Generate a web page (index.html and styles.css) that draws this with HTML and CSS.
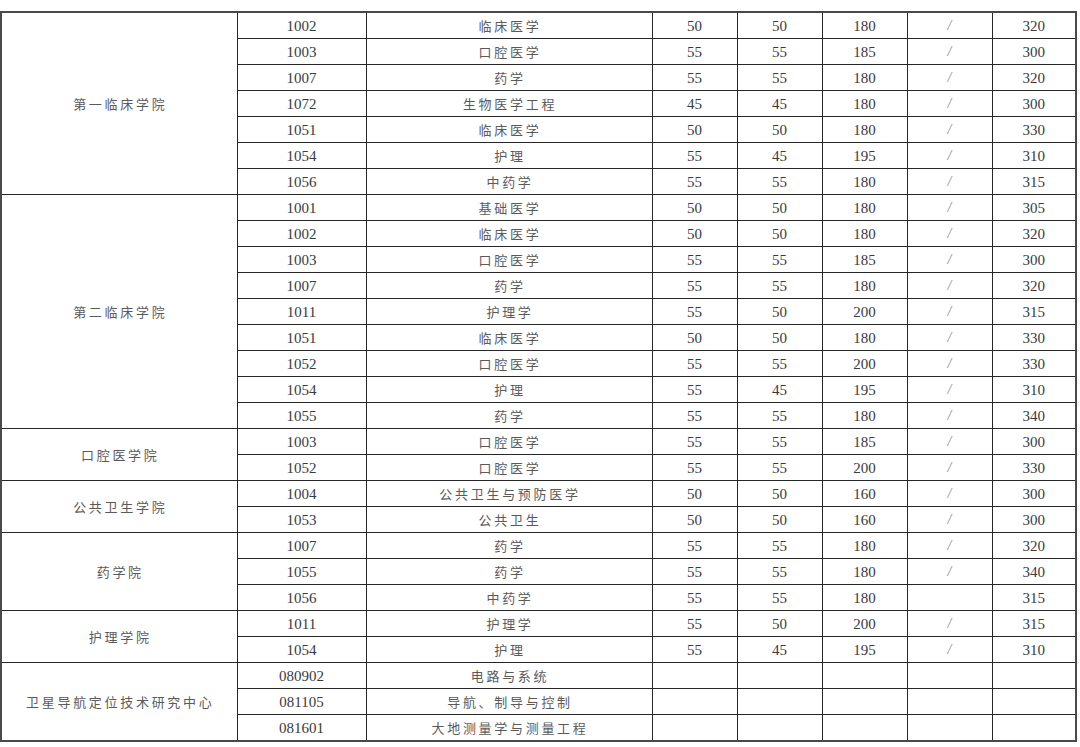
FILE: index.html
```html
<!DOCTYPE html>
<html lang="zh">
<head>
<meta charset="utf-8">
<title>分数线</title>
<link rel="stylesheet" href="styles.css">
</head>
<body>
<table class="scores">
<colgroup>
<col class="c-school"><col class="c-code"><col class="c-major"><col class="c-n"><col class="c-n"><col class="c-n"><col class="c-n"><col class="c-last">
</colgroup>
<tbody>
<tr><td class="cn" rowspan="7">第一临床学院</td><td>1002</td><td class="cn">临床医学</td><td>50</td><td>50</td><td>180</td><td class="sl">/</td><td>320</td></tr>
<tr><td>1003</td><td class="cn">口腔医学</td><td>55</td><td>55</td><td>185</td><td class="sl">/</td><td>300</td></tr>
<tr><td>1007</td><td class="cn">药学</td><td>55</td><td>55</td><td>180</td><td class="sl">/</td><td>320</td></tr>
<tr><td>1072</td><td class="cn">生物医学工程</td><td>45</td><td>45</td><td>180</td><td class="sl">/</td><td>300</td></tr>
<tr><td>1051</td><td class="cn">临床医学</td><td>50</td><td>50</td><td>180</td><td class="sl">/</td><td>330</td></tr>
<tr><td>1054</td><td class="cn">护理</td><td>55</td><td>45</td><td>195</td><td class="sl">/</td><td>310</td></tr>
<tr><td>1056</td><td class="cn">中药学</td><td>55</td><td>55</td><td>180</td><td class="sl">/</td><td>315</td></tr>

<tr><td class="cn" rowspan="9">第二临床学院</td><td>1001</td><td class="cn">基础医学</td><td>50</td><td>50</td><td>180</td><td class="sl">/</td><td>305</td></tr>
<tr><td>1002</td><td class="cn">临床医学</td><td>50</td><td>50</td><td>180</td><td class="sl">/</td><td>320</td></tr>
<tr><td>1003</td><td class="cn">口腔医学</td><td>55</td><td>55</td><td>185</td><td class="sl">/</td><td>300</td></tr>
<tr><td>1007</td><td class="cn">药学</td><td>55</td><td>55</td><td>180</td><td class="sl">/</td><td>320</td></tr>
<tr><td>1011</td><td class="cn">护理学</td><td>55</td><td>50</td><td>200</td><td class="sl">/</td><td>315</td></tr>
<tr><td>1051</td><td class="cn">临床医学</td><td>50</td><td>50</td><td>180</td><td class="sl">/</td><td>330</td></tr>
<tr><td>1052</td><td class="cn">口腔医学</td><td>55</td><td>55</td><td>200</td><td class="sl">/</td><td>330</td></tr>
<tr><td>1054</td><td class="cn">护理</td><td>55</td><td>45</td><td>195</td><td class="sl">/</td><td>310</td></tr>
<tr><td>1055</td><td class="cn">药学</td><td>55</td><td>55</td><td>180</td><td class="sl">/</td><td>340</td></tr>

<tr><td class="cn" rowspan="2">口腔医学院</td><td>1003</td><td class="cn">口腔医学</td><td>55</td><td>55</td><td>185</td><td class="sl">/</td><td>300</td></tr>
<tr><td>1052</td><td class="cn">口腔医学</td><td>55</td><td>55</td><td>200</td><td class="sl">/</td><td>330</td></tr>

<tr><td class="cn" rowspan="2">公共卫生学院</td><td>1004</td><td class="cn">公共卫生与预防医学</td><td>50</td><td>50</td><td>160</td><td class="sl">/</td><td>300</td></tr>
<tr><td>1053</td><td class="cn">公共卫生</td><td>50</td><td>50</td><td>160</td><td class="sl">/</td><td>300</td></tr>

<tr><td class="cn" rowspan="3">药学院</td><td>1007</td><td class="cn">药学</td><td>55</td><td>55</td><td>180</td><td class="sl">/</td><td>320</td></tr>
<tr><td>1055</td><td class="cn">药学</td><td>55</td><td>55</td><td>180</td><td class="sl">/</td><td>340</td></tr>
<tr><td>1056</td><td class="cn">中药学</td><td>55</td><td>55</td><td>180</td><td class="sl"></td><td>315</td></tr>

<tr><td class="cn" rowspan="2">护理学院</td><td>1011</td><td class="cn">护理学</td><td>55</td><td>50</td><td>200</td><td class="sl">/</td><td>315</td></tr>
<tr><td>1054</td><td class="cn">护理</td><td>55</td><td>45</td><td>195</td><td class="sl">/</td><td>310</td></tr>

<tr><td class="cn" rowspan="3">卫星导航定位技术研究中心</td><td>080902</td><td class="cn">电路与系统</td><td></td><td></td><td></td><td></td><td></td></tr>
<tr><td>081105</td><td class="cn">导航、制导与控制</td><td></td><td></td><td></td><td></td><td></td></tr>
<tr><td>081601</td><td class="cn">大地测量学与测量工程</td><td></td><td></td><td></td><td></td><td></td></tr>
</tbody>
</table>
</body>
</html>
```

FILE: styles.css
```css
html, body {
  margin: 0;
  padding: 0;
  background: #ffffff;
}

body {
  padding-top: 11px;
  font-family: "Liberation Serif", "Noto Sans CJK SC", serif;
  color: #3a3a3a;
}

.scores {
  border-collapse: collapse;
  table-layout: fixed;
  width: 1077px;
  border: 2px solid #4a4a4a;
}

.c-school { width: 236px; }
.c-code { width: 129px; }
.c-major { width: 286px; }
.c-n { width: 85px; }
.c-last { width: 84px; }

.scores td {
  border: 1px solid #262626;
  height: 24px;
  padding: 1px 0 0;
  text-align: center;
  vertical-align: middle;
  font-size: 15px;
  line-height: 18px;
  white-space: nowrap;
  overflow: hidden;
}

.scores td.cn {
  font-family: "Noto Sans CJK SC", sans-serif;
  font-size: 13px;
  letter-spacing: 2.7px;
  padding-left: 2px;
  color: #5a5a5a;
}

.scores td.sl {
  color: #888888;
  font-size: 14px;
  font-style: italic;
}
```
